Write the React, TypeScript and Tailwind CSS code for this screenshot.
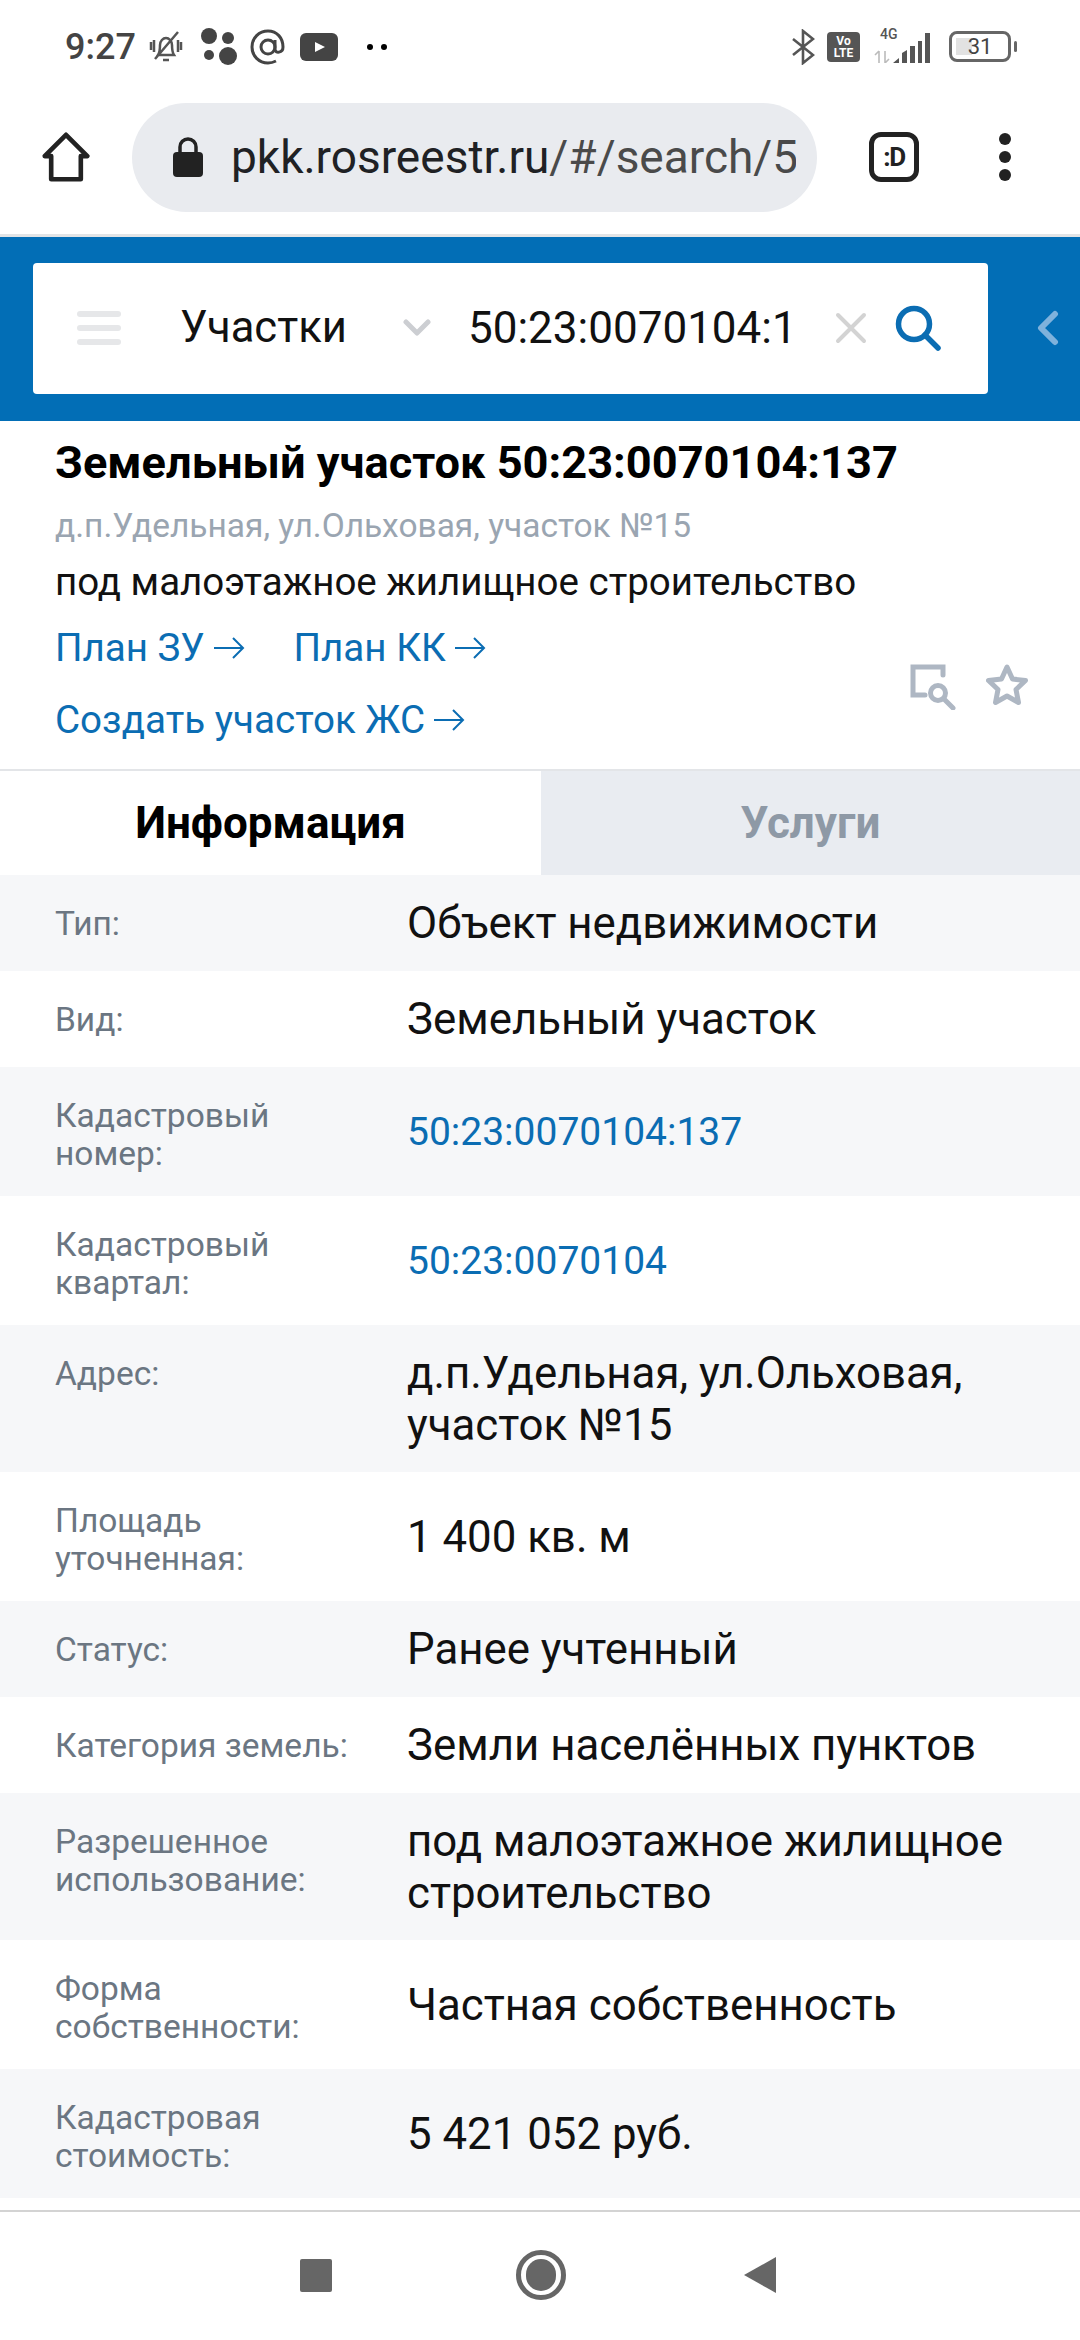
import React from "react";

const rows = [
  { label: ["Тип:"], value: ["Объект недвижимости"], h: "h-[96px]", shade: true },
  { label: ["Вид:"], value: ["Земельный участок"], h: "h-[96px]" },
  { label: ["Кадастровый", "номер:"], value: ["50:23:0070104:137"], h: "h-[129px]", shade: true, link: true },
  { label: ["Кадастровый", "квартал:"], value: ["50:23:0070104"], h: "h-[129px]", link: true },
  { label: ["Адрес:"], value: ["д.п.Удельная, ул.Ольховая,", "участок №15"], h: "h-[147px]", shade: true },
  { label: ["Площадь", "уточненная:"], value: ["1 400 кв. м"], h: "h-[129px]" },
  { label: ["Статус:"], value: ["Ранее учтенный"], h: "h-[96px]", shade: true },
  { label: ["Категория земель:"], value: ["Земли населённых пунктов"], h: "h-[96px]" },
  { label: ["Разрешенное", "использование:"], value: ["под малоэтажное жилищное", "строительство"], h: "h-[147px]", shade: true },
  { label: ["Форма", "собственности:"], value: ["Частная собственность"], h: "h-[129px]" },
  { label: ["Кадастровая", "стоимость:"], value: ["5 421 052 руб."], h: "h-[129px]", shade: true },
];

const Arrow = () => (
  <svg width="32" height="24" viewBox="0 0 32 24" fill="none" stroke="#0b6db3" strokeWidth="2" className="ml-[8px] shrink-0">
    <path d="M1 12h29M20 2l10 10-10 10" />
  </svg>
);

const StatusBar = () => (
  <div className="h-[88px] shrink-0 flex items-center justify-between pl-[65px] pr-[69px] pt-[5px] text-[#444]">
    <div className="flex items-center">
      <span className="text-[36px] font-medium leading-none text-[#444]">9:27</span>
      <svg width="36" height="36" viewBox="0 0 36 36" fill="none" stroke="#555" strokeWidth="2.5" className="ml-[12px]">
        <path d="M10 26c2-3 2-6 2-10 0-4 3-7 6-7s6 3 6 7c0 4 0 7 2 10zM15 31h6M30 3 7 30M3 13v8M6 11v12M30 11v12M33 13v8" />
      </svg>
      <svg width="38" height="38" viewBox="0 0 38 38" fill="#444" className="ml-[16px]">
        <circle cx="9" cy="8" r="8" /><circle cx="28" cy="10" r="6" /><circle cx="9" cy="27" r="5" /><circle cx="28" cy="28" r="9" />
      </svg>
      <svg width="36" height="36" viewBox="0 0 36 36" fill="none" stroke="#444" strokeWidth="3" className="ml-[12px]">
        <circle cx="18" cy="18" r="7" />
        <path d="M25 11v9c0 5 8 4 8-2 0-9-6-16-15-16S2 9 2 18s7 16 16 16c3 0 6-1 8-2" />
      </svg>
      <svg width="38" height="28" viewBox="0 0 38 28" className="ml-[14px]">
        <rect width="38" height="28" rx="6" fill="#444" />
        <path d="M15 9l10 5-10 5z" fill="#fff" />
      </svg>
      <span className="ml-[29px] w-[6px] h-[6px] rounded-full bg-black" />
      <span className="ml-[8px] w-[6px] h-[6px] rounded-full bg-black" />
    </div>
    <div className="flex items-center">
      <svg width="24" height="36" viewBox="0 0 24 36" fill="none" stroke="#555" strokeWidth="2.6">
        <path d="M2 10l20 16-10 8V2l10 8L2 26" />
      </svg>
      <div className="ml-[12px] w-[33px] h-[30px] rounded-[4px] bg-[#555] flex flex-col items-center justify-center text-white text-[12px] font-bold leading-[12px]">
        <span>Vo</span>
        <span>LTE</span>
      </div>
      <div className="ml-[14px] relative w-[58px] h-[32px]">
        <span className="absolute left-[6px] -top-[4px] text-[14px] font-medium leading-none text-[#555]">4G</span>
        <svg width="58" height="32" viewBox="0 0 58 32" fill="#555" className="absolute left-0 top-0">
          <path d="M19 32l6-5v5zM28 22l5-3v13h-5zM36 15h5v17h-5zM44 10h4v22h-4zM51 2h5v30h-5z" />
          <path d="M5 20v12M1 24l4-4M11 20v12M15 28l-4 4" stroke="#bbb" strokeWidth="1.6" fill="none" />
        </svg>
      </div>
      <div className="ml-[17px] relative w-[62px] h-[31px] rounded-[8px] border-[3px] border-[#666] flex items-center justify-center">
        <div className="absolute left-[4px] top-[4px] bottom-[4px] w-[16px] bg-[#e2e2e2]" />
        <span className="relative text-[22px] leading-none text-[#444]">31</span>
        <div className="absolute -right-[9px] top-[7px] w-[3px] h-[11px] rounded-full bg-[#666]" />
      </div>
    </div>
  </div>
);

const Toolbar = () => (
  <div className="h-[146px] shrink-0 flex items-center pb-[8px]">
    <svg width="50" height="50" viewBox="0 0 52 54" fill="none" stroke="#222" strokeWidth="5" strokeLinejoin="round" className="ml-[41px] shrink-0">
      <path d="M3 26 26 3l23 23h-7v25H10V26z" />
    </svg>
    <div className="ml-[41px] w-[685px] h-[109px] rounded-[55px] bg-[#e9ebef] flex items-center pl-[40px] overflow-hidden shrink-0">
      <svg width="32" height="40" viewBox="0 0 32 40" className="shrink-0">
        <path d="M8 16V10a8 8 0 0 1 16 0v6" fill="none" stroke="#222" strokeWidth="3.500" />
        <rect x="1" y="15" width="30" height="25" rx="4" fill="#222" />
      </svg>
      <span className="ml-[27px] text-[46px] leading-[56px] whitespace-nowrap w-[565px] overflow-hidden">
        <span className="text-[#202124]">pkk.rosreestr.ru</span>
        <span className="text-[#4a4a4a]">/#/search/5</span>
      </span>
    </div>
    <div className="ml-[52px] w-[50px] h-[50px] rounded-[12px] border-[5px] border-[#222] flex items-center justify-center text-[26px] font-bold tracking-tighter text-[#222] shrink-0">
      :D
    </div>
    <div className="ml-[80px] flex flex-col gap-[6px]">
      <span className="w-[12px] h-[12px] rounded-full bg-[#222]" />
      <span className="w-[12px] h-[12px] rounded-full bg-[#222]" />
      <span className="w-[12px] h-[12px] rounded-full bg-[#222]" />
    </div>
  </div>
);

const SearchBar = () => (
  <div className="h-[187px] shrink-0 border-t-[3px] border-[#e2e4e6] bg-[#026eb6] flex items-center pl-[33px] pb-[2px]">
    <div className="w-[955px] h-[131px] rounded-[4px] bg-white flex items-center">
      <div className="ml-[44px] w-[44px] flex flex-col gap-[8px]">
        <span className="h-[6px] rounded-full bg-[#e6e7e9]" />
        <span className="h-[6px] rounded-full bg-[#e6e7e9]" />
        <span className="h-[6px] rounded-full bg-[#e6e7e9]" />
      </div>
      <span className="ml-[59px] text-[43.600px] leading-none text-[#111] w-[223px]">Участки</span>
      <svg width="28" height="18" viewBox="0 0 28 18" fill="none" stroke="#ccced2" strokeWidth="5" strokeLinecap="round" strokeLinejoin="round" className="shrink-0">
        <path d="M3 3l11 11L25 3" />
      </svg>
      <span className="ml-[37px] w-[325px] overflow-hidden whitespace-nowrap text-[44px] leading-none text-[#111]">50:23:0070104:137</span>
      <svg width="32" height="32" viewBox="0 0 32 32" fill="none" stroke="#d3d3d3" strokeWidth="4" strokeLinecap="round" className="ml-[42px] shrink-0">
        <path d="M3 3l26 26M29 3 3 29" />
      </svg>
      <svg width="46" height="46" viewBox="0 0 46 46" fill="none" stroke="#0b6db3" strokeWidth="5.500" strokeLinecap="round" className="ml-[28px] shrink-0">
        <circle cx="19" cy="19" r="15.500" />
        <path d="M30 30l13 13" />
      </svg>
    </div>
    <svg width="22" height="36" viewBox="0 0 22 36" fill="none" stroke="#7fb2dc" strokeWidth="6" strokeLinecap="round" strokeLinejoin="round" className="ml-[49px] shrink-0">
      <path d="M18 4 4 18l14 14" />
    </svg>
  </div>
);

const Header = () => (
  <div className="h-[350px] shrink-0 relative pl-[55px] pt-[15px] border-b-[2px] border-[#e3e5e8]">
    <div className="text-[45.200px] leading-[54px] font-bold text-black">Земельный участок 50:23:0070104:137</div>
    <div className="mt-[16px] text-[33.500px] leading-[40px] text-[#9aa5b1]">д.п.Удельная, ул.Ольховая, участок №15</div>
    <div className="mt-[12px] text-[38.500px] leading-[48px] text-[#111]">под малоэтажное жилищное строительство</div>
    <div className="mt-[17px] flex items-center text-[38.600px] leading-[50px] text-[#0b6db3]">
      <span>План ЗУ</span>
      <Arrow />
      <span className="ml-[49px]">План КК</span>
      <Arrow />
    </div>
    <div className="mt-[22px] flex items-center text-[38.600px] leading-[50px] text-[#0b6db3]">
      <span>Создать участок ЖС</span>
      <Arrow />
    </div>
    <div className="absolute left-[910px] top-[243px] flex items-start">
      <svg width="46" height="46" viewBox="0 0 46 46" fill="none" stroke="#aeb7c3" strokeWidth="5" strokeLinecap="round">
        <path d="M33 11V3H3v28h12" />
        <circle cx="28" cy="29" r="7.500" />
        <path d="M34 35l9 9" />
      </svg>
      <svg width="42" height="42" viewBox="0 0 42 42" fill="none" stroke="#aeb7c3" strokeWidth="5" strokeLinejoin="round" className="ml-[30px]">
        <path d="M21 3l5.500 12 13 1.500-9.500 9 2.500 13L21 32l-11.500 6.500 2.500-13-9.500-9 13-1.500z" />
      </svg>
    </div>
  </div>
);

const Tabs = () => (
  <div className="h-[104px] shrink-0 flex text-[44px] font-bold">
    <div className="w-[541px] flex items-center justify-center text-black">Информация</div>
    <div className="flex-1 bg-[#e9ecf1] flex items-center justify-center text-[#8e99a6]">Услуги</div>
  </div>
);

export default function App() {
  return (
    <div className="w-[1080px] h-[2340px] bg-white flex flex-col overflow-hidden font-['Roboto',sans-serif]">
      <StatusBar />
      <Toolbar />
      <SearchBar />
      <Header />
      <Tabs />
      <div className="flex-1 flex flex-col">
        {rows.map((row) => (
          <div key={row.label[0]} className={`${row.h} shrink-0 flex pl-[55px] ${row.shade ? "bg-[#f6f7f9]" : "bg-white"}`}>
            <div className="w-[352px] shrink-0 pt-[30px] text-[33.500px] leading-[38px] text-[#6b7682]">
              {row.label.map((line) => (
                <div key={line}>{line}</div>
              ))}
            </div>
            <div className={row.link ? "self-center text-[39px] leading-[52px] text-[#0b6db3]" : "self-center text-[43.800px] leading-[52px] text-[#111]"}>
              {row.value.map((line) => (
                <div key={line}>{line}</div>
              ))}
            </div>
          </div>
        ))}
        <div className="mt-auto h-[130px] shrink-0 border-t-[2px] border-[#d3d3d3] flex items-center pb-[2px] relative">
          <div className="ml-[300px] w-[32px] h-[33px] rounded-[2px] bg-[#666]" />
          <div className="ml-[184px] w-[50px] h-[50px] rounded-full border-[5px] border-[#666] flex items-center justify-center">
            <div className="w-[30px] h-[32px] rounded-full bg-[#666]" />
          </div>
          <svg width="34" height="38" viewBox="0 0 34 38" fill="#666" className="ml-[177px]">
            <path d="M33 1 1 19l32 18z" />
          </svg>
        </div>
      </div>
    </div>
  );
}
